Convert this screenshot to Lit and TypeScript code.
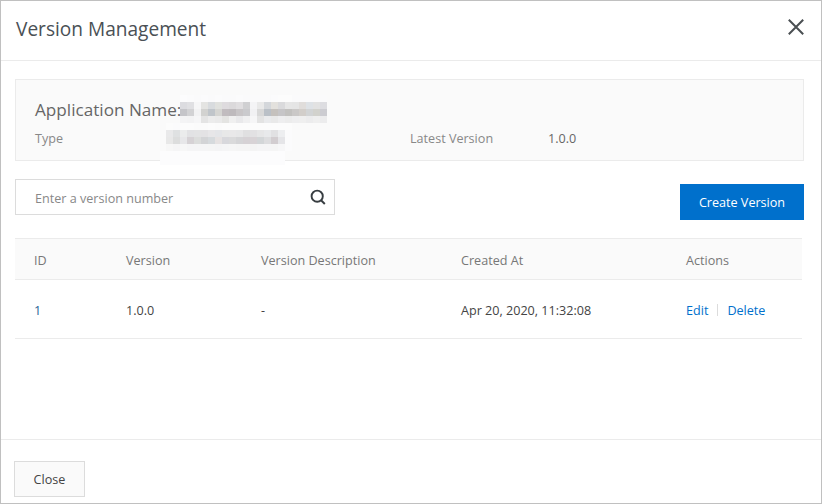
import { LitElement, html, css } from "lit";
import { customElement } from "lit/decorators.js";

const NAME_MOSAIC = [
  "fcfcfd fbfbfc fafafb fbfbfc fafafb fbfbfc fafafb fafafb fbfbfc fafafb fafafb fafafb fafafb fbfbfc fcfcfc fcfcfc fafafb fafafb fafafb fafafb fafafb",
  "dcdce0 e0e0e3 f6f6f7 e4e4e2 d8dbde e0e1de dedbde dbd9db e0dee0 d0d0d2 f4f4f6 e9e9e9 d4d7db e3e1dd dadadc e6e6e6 e5e5e5 e0dddb dee2e6 e2e2e2 dddde1",
  "c5c5c9 d2d2d4 f2f2f3 d2d2d0 c0c5ca d5d5d2 c1bcbf bebabd c8c5c7 cacacd f1f1f3 d8d8d8 bac0c7 c5c1bd c6c5c7 c2c1bf cac8c7 d2cecA d2d4d5 d2d2cd cccCd1",
  "f4f4f5 f3f3f4 f6f6f7 e4e4e4 ececec eaeaea e4e4e2 f0f0f0 e9e9eb f0f0f1 f6f6f7 e3e3e3 eaebed e9e9e9 eeeeef ececec eeeeef efefef ececed efefef ececed",
];
const TYPE_MOSAIC = [
  "fcfcfc fbfbfc fcfcfc fcfcfc fbfbfb fbfbfb fcfcfc fbfbfb fcfcfc fcfcfc fcfcfc fcfcfc fcfcfc fcfcfc fcfcfc fcfcfc fcfcfc fcfcfc",
  "e9e9ea dfe1e2 ebecec e2e2e4 e3e3e4 e3e2e4 e7e6e8 e4e5e8 e8e8e8 e9e8e9 e7e7e8 e0e0e1 e2e1e3 e6e6e7 e8e9eb e1e1e3 edeef0 fbfbfc",
  "e8e8e8 dcdddd e7e7e9 d6d2d5 dcdddc d3d4d6 d6dadd e6e2e2 d8d8dc dadadb d5d5d7 d6d2d5 d8d3d6 d3d6d8 dddddf d2cdd0 e5e5e8 fbfbfc",
  "f7f7f7 f5f5f6 f7f7f7 f5f5f6 f5f5f6 f5f5f6 f5f5f5 f4f4f5 f5f5f6 f6f6f6 f5f5f5 f5f5f5 f4f4f4 f5f5f6 f5f5f6 f5f5f5 f7f7f8 fbfbfc",
];

const mosaic = (rows: string[]) => rows.flatMap((r) => r.split(" ")).map((c) => `#${c}`);

@customElement("app-root")
export class AppRoot extends LitElement {
  static styles = css`
    :host {
      display: block;
      width: 822px;
      height: 504px;
      font-family: "Open Sans", "Noto Sans", sans-serif;
      color: #333;
    }
    * { box-sizing: border-box; }
    .dialog {
      width: 822px;
      height: 504px;
      border: 1px solid #c0c0c0;
      background: #fff;
      display: flex;
      flex-direction: column;
    }
    .head {
      height: 60px;
      flex: none;
      border-bottom: 1px solid #ebebeb;
      display: flex;
      align-items: center;
      justify-content: space-between;
      padding: 0 17px 8px 15px;
    }
    .title {
      font-size: 19.1px;
      color: #4a5055;
      margin-top: 4px;
    }
    .close-x { display: block; color: #4a4f52; }
    .body {
      flex: 1;
      padding: 18px 17px 0 14px;
      display: flex;
      flex-direction: column;
    }
    .card {
      position: relative;
      height: 82px;
      background: #fafafa;
      border: 1px solid #ebebeb;
      padding: 16px 19px 0;
      display: flex;
      flex-direction: column;
    }
    .name-row {
      display: flex;
      align-items: center;
      height: 26px;
      font-size: 17.15px;
      color: #666;
    }
    .info-row {
      display: flex;
      align-items: center;
      height: 24px;
      margin-top: 4px;
      font-size: 12.6px;
      color: #888;
    }
    .type-label { width: 375px; }
    .version-label { width: 138px; }
    .version-value { color: #666; }
    .mosaic { display: grid; }
    .mosaic i { display: block; width: 7px; height: 7px; }
    .name-mosaic { grid-template-columns: repeat(21, 7px); margin-left: -1px; }
    .type-mosaic {
      position: absolute;
      left: 150px;
      top: 43px;
      grid-template-columns: repeat(18, 7px);
    }
    .type-tail {
      position: absolute;
      left: 144px;
      top: 71px;
      width: 125px;
      height: 14px;
      background: #fcfcfd;
    }
    .tools {
      margin-top: 18px;
      display: flex;
      justify-content: space-between;
      align-items: flex-start;
    }
    .search {
      width: 320px;
      height: 36px;
      border: 1px solid #dcdcdc;
      display: flex;
      align-items: center;
      justify-content: space-between;
      padding: 2px 8px 0 19px;
      font-size: 12.6px;
      color: #888;
    }
    .search svg { margin-top: -2px; }
    .create {
      margin-top: 5px;
      width: 124px;
      height: 36px;
      background: #0070cc;
      color: #fff;
      font-size: 12.6px;
      display: flex;
      align-items: center;
      justify-content: center;
    }
    .table {
      margin-top: 18px;
      width: 787px;
      font-size: 12.6px;
    }
    .row {
      display: grid;
      grid-template-columns: 92px 135px 200px 225px 1fr;
      align-items: center;
      padding: 2px 0 0 19px;
    }
    .thead {
      height: 42px;
      background: #fafafa;
      border-top: 1px solid #ebebeb;
      border-bottom: 1px solid #ebebeb;
      color: #777;
    }
    .tbody {
      height: 59px;
      border-bottom: 1px solid #ebebeb;
      color: #444;
    }
    .id { color: #2a6496; }
    .actions { display: flex; align-items: center; color: #0070cc; }
    .sep {
      width: 1px;
      height: 12px;
      background: #dcdcdc;
      margin: 0 9px;
    }
    .foot {
      height: 64px;
      flex: none;
      border-top: 1px solid #ebebeb;
      padding: 21px 0 0 13px;
    }
    .close {
      width: 71px;
      height: 36px;
      background: #fafafa;
      border: 1px solid #dcdcdc;
      font-size: 12.6px;
      display: flex;
      align-items: center;
      justify-content: center;
      color: #444;
    }
  `;

  render() {
    return html`
      <div class="dialog">
        <div class="head">
          <div class="title">Version Management</div>
          <svg class="close-x" width="16" height="16" viewBox="0 0 16 16" fill="none" stroke="currentColor" stroke-width="2">
            <path d="M.8 .8 15.2 15.2M15.2 .8 .8 15.2" />
          </svg>
        </div>
        <div class="body">
          <div class="card">
            <div class="name-row">
              <span>Application Name:</span>
              <div class="mosaic name-mosaic">
                ${mosaic(NAME_MOSAIC).map((c) => html`<i style="background:${c}"></i>`)}
              </div>
            </div>
            <div class="info-row">
              <span class="type-label">Type</span>
              <span class="version-label">Latest Version</span>
              <span class="version-value">1.0.0</span>
            </div>
            <div class="mosaic type-mosaic">
              ${mosaic(TYPE_MOSAIC).map((c) => html`<i style="background:${c}"></i>`)}
            </div>
            <div class="type-tail"></div>
          </div>
          <div class="tools">
            <div class="search">
              <span>Enter a version number</span>
              <svg width="16" height="16" viewBox="0 0 16 16" fill="none" stroke="#373d41" stroke-width="1.9">
                <circle cx="7.2" cy="7.2" r="5.6" />
                <path d="M10.8 11 14.8 15" />
              </svg>
            </div>
            <div class="create">Create Version</div>
          </div>
          <div class="table">
            <div class="row thead">
              <span>ID</span><span>Version</span><span>Version Description</span><span>Created At</span><span>Actions</span>
            </div>
            <div class="row tbody">
              <span class="id">1</span><span>1.0.0</span><span>-</span><span>Apr 20, 2020, 11:32:08</span>
              <span class="actions">Edit<span class="sep"></span>Delete</span>
            </div>
          </div>
        </div>
        <div class="foot"><div class="close">Close</div></div>
      </div>
    `;
  }
}
